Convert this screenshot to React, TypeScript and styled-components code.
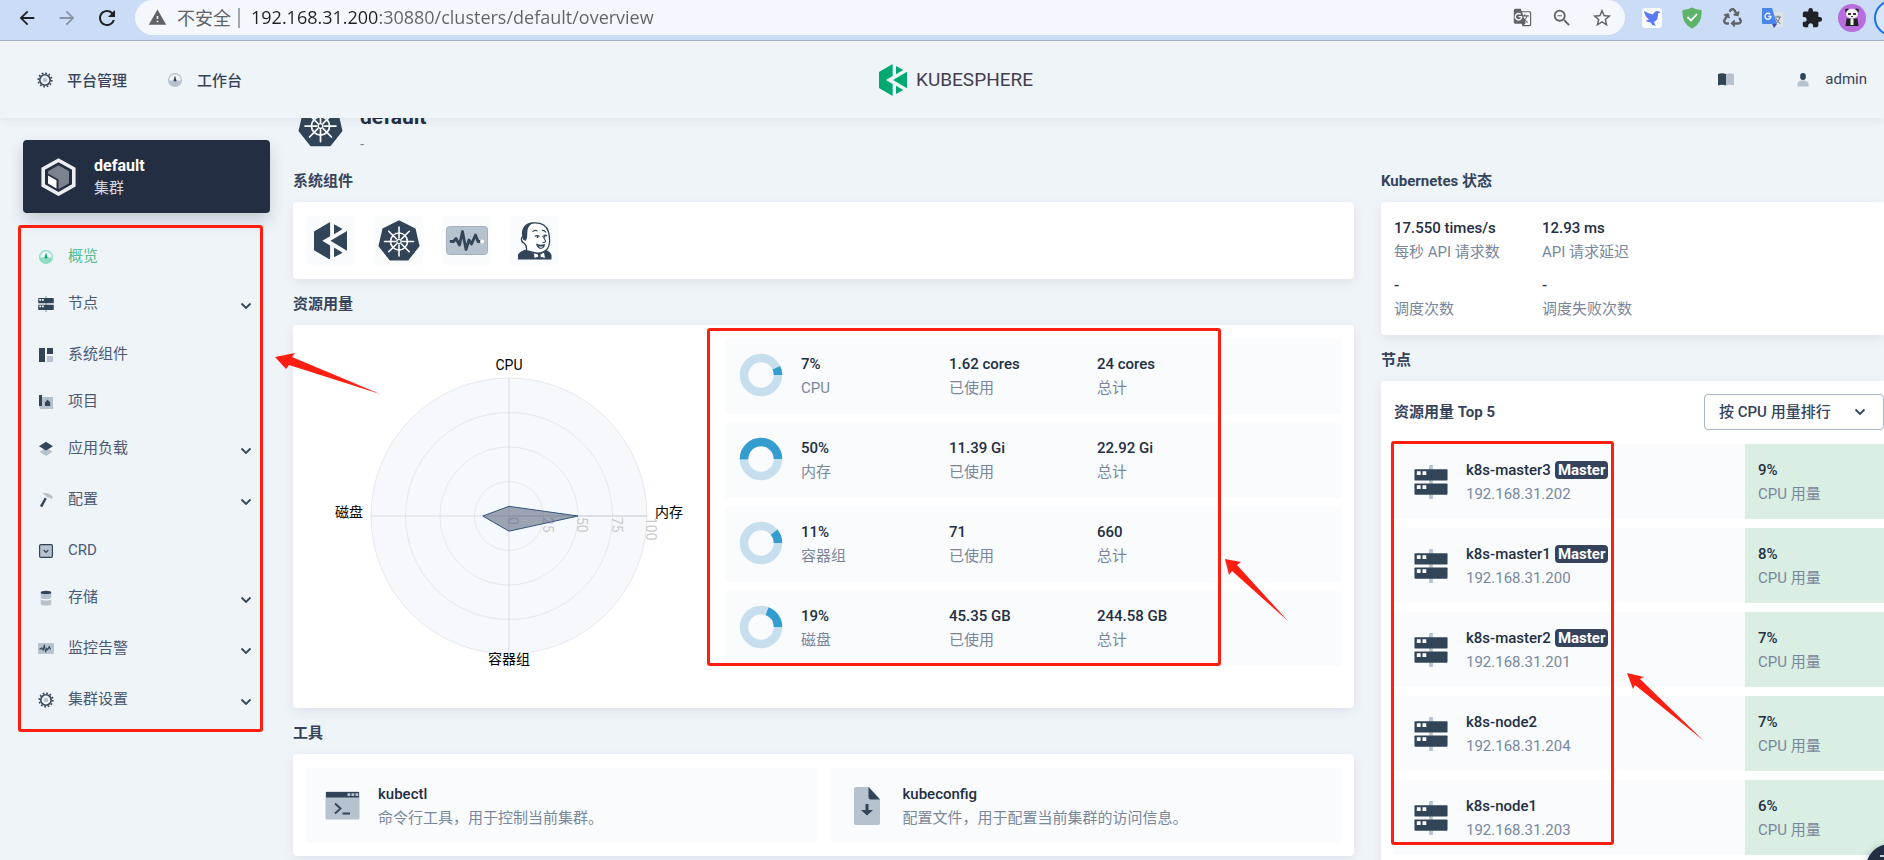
import React from 'react';
import styled, { createGlobalStyle } from 'styled-components';
import {
  MdArrowBack,
  MdArrowForward,
  MdExtension,
  MdGTranslate,
  MdRefresh,
  MdStarOutline,
  MdWarning,
  MdZoomOut,
} from 'react-icons/md';
import { FaRecycle } from 'react-icons/fa';

const dark = '#324558';
const light = '#b6c2cd';
const red = '#ff1f12';

const GlobalStyle = createGlobalStyle`
  *, *::before, *::after { box-sizing: border-box; }
  body {
    margin: 0;
    font-family: Roboto, "Noto Sans CJK SC", sans-serif;
    font-size: 15px;
    line-height: 23px;
    color: #36435c;
    background: #eff4f9;
  }
  button, input, select { font: inherit; color: inherit; }
  button { padding: 0; border: 0; background: none; cursor: pointer; }
  a { color: inherit; text-decoration: none; }
  h1, h2, h3, p, ul, dl, dd { margin: 0; padding: 0; }
  ul { list-style: none; }
  svg { display: block; flex: none; }
`;

const Page = styled.div`
  position: relative;
  display: flex;
  flex-direction: column;
  height: 100vh;
  overflow: hidden;
`;

/* ---------- browser bar ---------- */

const BrowserBar = styled.div`
  flex: none;
  display: flex;
  align-items: flex-start;
  height: 41px;
  padding-left: 7px;
  background: #cbdcf6;
  border-bottom: 1px solid #a0afca;
  overflow: hidden;
`;

const BrowserButton = styled.button<{ $faded?: boolean }>`
  flex: none;
  display: flex;
  align-items: center;
  justify-content: center;
  width: 40px;
  height: 35px;
  color: ${(p) => (p.$faded ? '#8a94a6' : '#202124')};
`;

const NavButtons = styled.div`
  display: flex;
  width: 128px;
`;

const AddressBar = styled.label`
  flex: 1;
  min-width: 0;
  display: flex;
  align-items: center;
  height: 35px;
  padding: 0 3px 0 13px;
  border-radius: 18px;
  background: #f4f7fd;
  color: #5f6368;
  font-family: "Open Sans", "Noto Sans CJK SC", sans-serif;
  font-size: 18px;
`;

const Insecure = styled.span`
  margin-left: 10px;
  padding-right: 7px;
  border-right: 2px solid #a4a8ad;
  line-height: 20px;
  white-space: nowrap;
`;

const Address = styled.input`
  flex: 1;
  min-width: 0;
  margin-left: 11px;
  padding: 0;
  border: 0;
  outline: 0;
  color: transparent;
  background: linear-gradient(90deg, #202124 129px, #5f6368 129px);
  background-clip: text;
  -webkit-background-clip: text;
`;

const Extensions = styled.div`
  flex: none;
  display: flex;
  width: 259px;
  padding-left: 7px;
`;

/* ---------- console header ---------- */

const TopBar = styled.header`
  position: relative;
  z-index: 2;
  flex: none;
  display: grid;
  grid-template-columns: 1fr auto 1fr;
  align-items: center;
  height: 77px;
  padding: 0 9px 0 37px;
  background: #eff4f8;
  box-shadow: 0 4px 8px rgba(36, 46, 66, 0.06);
`;

const TopNav = styled.nav`
  display: flex;
  gap: 40px;
`;

const TopLink = styled.a`
  display: flex;
  align-items: center;
  gap: 14px;
  font-weight: 500;
  span { padding-top: 4px; }
`;

const Brand = styled.a`
  display: flex;
  align-items: center;
  gap: 9px;
  color: #443d4e;
  font-size: 19px;
`;

const UserArea = styled.div`
  display: flex;
  align-items: center;
  justify-content: flex-end;
  gap: 63px;
`;

const UserButton = styled.button`
  display: flex;
  align-items: center;
  gap: 16px;
  margin-right: 8px;
`;

/* ---------- layout ---------- */

const Body = styled.div`
  flex: 1;
  min-height: 0;
  display: flex;
`;

const Sidebar = styled.aside`
  flex: none;
  width: 293px;
  padding: 22px 23px 0;
`;

const ClusterCard = styled.button`
  display: flex;
  align-items: center;
  gap: 18px;
  width: 100%;
  height: 73px;
  padding-left: 18px;
  border-radius: 4px;
  text-align: left;
  background: #242e42;
  box-shadow: 0 8px 16px rgba(36, 46, 66, 0.2);
`;

const ClusterText = styled.span`
  display: flex;
  flex-direction: column;
  color: #d5d9e0;
  strong { color: #fff; font-size: 16px; }
`;

const Menu = styled.ul`
  margin-top: 20px;
  padding: 0 18px 0 15px;
`;

const MenuLink = styled.a<{ $active?: boolean; $parent?: boolean }>`
  display: flex;
  align-items: center;
  height: ${(p) => (p.$parent ? 51 : 47)}px;
  color: ${(p) => (p.$active ? '#55bc8a' : '#4a5974')};
`;

const MenuLabel = styled.span<{ $parent?: boolean }>`
  flex: 1;
  display: flex;
  align-items: center;
  gap: 14px;
  padding-bottom: ${(p) => (p.$parent ? 4 : 0)}px;
`;

const MainColumn = styled.main`
  flex: 1;
  min-width: 0;
`;

const SideColumn = styled.section`
  flex: none;
  width: 503px;
  margin-left: 27px;
  padding-top: 38px;
`;

const ClusterTitle = styled.div`
  display: flex;
  gap: 16px;
  height: 54px;
  margin-top: -16px;
  padding-left: 4px;
  h1 {
    font-size: 21px;
    line-height: 30px;
    color: #242e42;
  }
  p { line-height: 24px; color: #79879c; }
`;

const Heading = styled.h2`
  display: flex;
  align-items: center;
  height: 46px;
  padding-top: 5px;
  font-size: 15px;
  font-weight: 700;
`;

const Card = styled.div<{ $bleed?: boolean }>`
  display: flex;
  padding: 14px 13px;
  border-radius: ${(p) => (p.$bleed ? '4px 0 0 4px' : '4px')};
  background: #fff;
  box-shadow: 0 4px 12px rgba(36, 46, 66, 0.08);
`;

const ComponentsCard = styled(Card)`
  gap: 19px;
`;

const ComponentTile = styled.a`
  display: flex;
  align-items: center;
  justify-content: center;
  width: 49px;
  height: 49px;
  border-radius: 4px;
  background: #f9fbfd;
`;

const UsageCard = styled(Card)`
  padding-bottom: 42px;
`;

const UsageRows = styled.div`
  flex: 1;
  display: flex;
  flex-direction: column;
  gap: 9px;
`;

const UsageRow = styled.dl`
  display: flex;
  height: 75px;
  padding: 14px 14px 0;
  background: #f9fbfd;
  svg { margin-right: 18px; }
`;

const Stat = styled.div`
  display: flex;
  flex-direction: column-reverse;
  justify-content: flex-end;
  width: 148px;
  white-space: nowrap;
  dt { color: #79879c; line-height: 24px; }
  dd { color: #242e42; font-weight: 500; }
`;

const ToolsCard = styled(Card)`
  gap: 14px;
  padding-bottom: 13px;
`;

const Tool = styled.button`
  flex: 1;
  display: flex;
  align-items: center;
  gap: 18px;
  height: 75px;
  padding-left: 19px;
  text-align: left;
  background: #f9fbfd;
`;

const TwoLine = styled.span`
  display: flex;
  flex-direction: column;
  line-height: 24px;
  color: #79879c;
  strong { color: #242e42; font-weight: 500; }
`;

const StatusCard = styled(Card)`
  padding-top: 15px;
`;

const StatusGrid = styled.dl`
  display: grid;
  grid-template-columns: 148px 148px;
  gap: 10px 0;
`;

const NodesCard = styled(Card)`
  flex-direction: column;
  padding: 13px 0 13px 13px;
`;

const NodesHead = styled.div`
  display: flex;
  align-items: center;
  justify-content: space-between;
  margin-bottom: 14px;
  h3 { font-size: 15px; font-weight: 700; }
`;

const SortBox = styled.div`
  display: grid;
  align-items: center;
  width: 180px;
  height: 36px;
  border: 1px solid #a9b4c4;
  border-radius: 4px;
  select, svg { grid-area: 1 / 1; }
  svg { justify-self: end; margin-right: 17px; pointer-events: none; }
`;

const Sort = styled.select`
  appearance: none;
  width: 100%;
  height: 34px;
  padding: 0 0 0 14px;
  border: 0;
  background: transparent;
  font-weight: 500;
`;

const NodeList = styled.ul`
  display: flex;
  flex-direction: column;
  gap: 9px;
`;

const NodeRow = styled.li`
  display: flex;
  height: 75px;
  background: #f9fbfd;
`;

const NodeInfo = styled.a`
  flex: 1;
  display: flex;
  align-items: center;
  gap: 18px;
  padding-left: 20px;
`;

const NodeUsage = styled.div`
  display: flex;
  align-items: center;
  width: 139px;
  padding-left: 13px;
  background: #daeee3;
`;

const Badge = styled.span`
  display: inline-block;
  margin-left: 4px;
  padding: 0 3px;
  border-radius: 4px;
  line-height: 18px;
  font-weight: 700;
  color: #fff;
  background: #36435c;
`;

const HelpButton = styled.button`
  position: absolute;
  right: -30px;
  bottom: -32px;
  display: flex;
  padding: 9px 0 0 13px;
  width: 48px;
  height: 48px;
  border-radius: 24px;
  background: #242e42;
  box-shadow: 0 2px 8px rgba(36, 46, 66, 0.3);
`;

/* ---------- markers drawn over the page ---------- */

const Frame = styled.div<{ $x: number; $y: number; $w: number; $h: number }>`
  position: absolute;
  z-index: 3;
  left: ${(p) => p.$x}px;
  top: ${(p) => p.$y}px;
  width: ${(p) => p.$w}px;
  height: ${(p) => p.$h}px;
  border: 3px solid ${red};
  border-radius: 3px;
  pointer-events: none;
`;

const Arrows = styled.svg`
  position: absolute;
  z-index: 3;
  left: 0;
  top: 0;
  pointer-events: none;
`;

/* ---------- icons ---------- */

const GearIcon = () => (
  <svg width="16" height="16" viewBox="0 0 16 16">
    <circle cx="8" cy="8" r="6.8" fill="none" stroke={dark} strokeWidth="1.6" strokeDasharray="1.7 1.86" />
    <circle cx="8" cy="8" r="5.2" fill="none" stroke={dark} strokeWidth="1.6" />
    <circle cx="8" cy="8" r="2.3" fill={light} />
  </svg>
);

const GaugeIcon = ({ rim = light, hand = dark }: { rim?: string; hand?: string }) => (
  <svg width="16" height="16" viewBox="0 0 16 16">
    <circle cx="8" cy="8" r="6.4" fill="#eef5f8" stroke={rim} strokeWidth="1.2" />
    <path d="M1.4 8.6h13.2a6.7 6.7 0 0 1-13.2 0z" fill={rim} />
    <path d="M8 3.6l1.4 4.6a1.4 1.4 0 1 1-2.8 0z" fill={hand} />
  </svg>
);

const NodesIcon = ({ size = 16 }: { size?: number }) => (
  <svg width={size} height={size} viewBox="0 0 36 36">
    <path d="M16 0h4v36h-4z" fill={light} />
    <rect x="0.5" y="4.5" width="35" height="12" rx="1" fill={dark} />
    <rect x="0.5" y="19.5" width="35" height="12" rx="1" fill={dark} />
    <path d="M3 6.5h4v4H3zM9 6.5h4v4H9zM3 21.5h4v4H3zM9 21.5h4v4H9z" fill="#fff" />
  </svg>
);

const ComponentsIcon = () => (
  <svg width="16" height="16" viewBox="0 0 16 16">
    <path d="M1 1h6v14H1zM9 1h6v6H9z" fill={dark} />
    <path d="M9 9h6v6H9z" fill={light} />
  </svg>
);

const ProjectIcon = () => (
  <svg width="16" height="16" viewBox="0 0 16 16">
    <path d="M4 3h11v12H2v-1.5h2z" fill={light} />
    <path d="M1 1h3v11H1zM7 12V8.5L9.600 5.500l2.600 3V12z" fill={dark} />
    <path d="M1 12h3v2.800H2z" fill={light} />
  </svg>
);

const LayersIcon = () => (
  <svg width="16" height="16" viewBox="0 0 16 16">
    <path d="M8 6.800l6.500 4L8 15l-6.500-4.200z" fill={light} />
    <path d="M8 .8l7 4.400-7 4.400-7-4.400z" fill={dark} />
  </svg>
);

const HammerIcon = () => (
  <svg width="16" height="16" viewBox="0 0 16 16">
    <path d="M4 1.800C6.500.4 9.500.8 11.500 2l2.500 2 1 .5-1.500 2.700-1.700-1.400-2.300-.3-1.400-1.200C7 3 6 2.300 4 1.800z" fill={light} />
    <path d="M6.800 5.500l1.900 1.200-4.500 8.600-2.300-1.200z" fill={dark} />
  </svg>
);

const CrdIcon = () => (
  <svg width="16" height="16" viewBox="0 0 16 16">
    <rect x="1.600" y="1.600" width="12.800" height="12.800" rx="1.200" fill={light} stroke={dark} strokeWidth="1.200" />
    <path d="M5.700 7l2.300 2.300L10.300 7" fill="none" stroke={dark} strokeWidth="1.200" />
  </svg>
);

const StorageIcon = () => (
  <svg width="16" height="16" viewBox="0 0 16 16">
    <path d="M2.700 3h10.600v4.500c0 2-10.600 2-10.600 0z" fill={light} />
    <path d="M2.700 9.500c1.500 1.400 9.100 1.400 10.600 0V14c0 2-10.600 2-10.600 0z" fill={light} />
    <ellipse cx="8" cy="2.400" rx="5.300" ry="1.700" fill={dark} />
  </svg>
);

const PulseIcon = ({ width = 16 }: { width?: number }) => (
  <svg width={width} height={(width * 29) / 42} viewBox="0 0 42 29">
    <rect x="0.500" y="0.500" width="41" height="28" rx="3" fill={light} stroke="#a3b1be" />
    <path
      d="M5 15.500h2.500l2.500-3 3.500 6.500L16.500 5.500l3.500 18 3-9.500 2.500 4L29.500 9l2.500 6.500h3"
      fill="none" stroke={dark} strokeWidth="2.800" strokeLinejoin="round" strokeLinecap="round"
    />
    <circle cx="36" cy="15.500" r="2" fill="#fff" />
  </svg>
);

const BookIcon = () => (
  <svg width="16" height="13" viewBox="0 0 16 13">
    <path d="M0 1q4-1.500 8 0v11.500q-4-1.500-8 0z" fill={dark} />
    <path d="M8 1q4-1.500 8 0v11.500q-4-1.500-8 0z" fill={light} />
  </svg>
);

const PersonIcon = () => (
  <svg width="12" height="16" viewBox="0 0 12 16">
    <path d="M0.500 14.500V12q0-3.500 5.500-3.500T11.500 12v2.500z" fill={light} />
    <rect x="3.200" y="1" width="5.600" height="7" rx="2.700" fill={dark} />
  </svg>
);

const Chevron = () => (
  <svg width="12" height="8" viewBox="0 0 12 8">
    <path d="M1.500 1.500L6 6l4.500-4.500" fill="none" stroke={dark} strokeWidth="1.800" />
  </svg>
);

const KubeSphereMark = ({ width, fill }: { width: number; fill: string }) => (
  <svg width={width} height={(width * 96) / 84} viewBox="0 0 84 96" fill={fill}>
    <path d="M0 24L41 0v36L21 48l20 12v36L0 72z" />
    <path d="M42 48l42-25v50zM51 6l22 12-22 13zM51 65l22 13-22 12z" />
  </svg>
);

const heptagon = Array.from({ length: 7 }, (_, i) => {
  const a = (i * 2 * Math.PI) / 7;
  return `${(22 + 20 * Math.sin(a)).toFixed(2)},${(22.5 - 20 * Math.cos(a)).toFixed(2)}`;
}).join(' ');

const KubernetesIcon = ({ size }: { size: number }) => (
  <svg width={size} height={size} viewBox="0 0 44 44">
    <polygon points={heptagon} fill={dark} stroke={dark} strokeWidth="2" strokeLinejoin="round" />
    <g stroke="#fff" strokeWidth="1.600" fill="none">
      <circle cx="22" cy="22.500" r="8.500" />
      {[0, 45, 90, 135, 180, 225, 270, 315].map((a) => (
        <path key={a} d="M22 19V8" transform={`rotate(${a} 22 22.500)`} strokeLinecap="round" />
      ))}
      <circle cx="22" cy="22.500" r="2.200" strokeWidth="1.200" />
    </g>
  </svg>
);

const JenkinsIcon = () => (
  <svg width="34" height="38" viewBox="0 0 34 38">
    <path d="M0 37.500v-5q2-3.500 8-5l9 5 9-5q6 1 7.500 5.500v4.500z" fill={dark} />
    <path
      d="M8.500 28.500Q9 24 6.500 21.500 3 20 3.500 16.500q.5-2 2-2Q3 2.500 14.500 1 28 0 30.500 10q1.500 6 1 10.500-.5 7-6.500 9.500-4 2-9.500.5z"
      fill="#fff" stroke={dark} strokeWidth="1.300"
    />
    <path d="M4.500 15Q1.500 3.500 14.500 1 10 4.500 9.500 8L9 16l-1.500 3L5 17.500z" fill={dark} />
    <path
      d="M14.500 10q2-2.500 5-1M24 8.500q2.500-.5 4 2M17 14.500q2-2 4.500 0M25.500 13.500q2-1 3.500.5M24.500 14q3 4 3 5.500-1 1.500-3 .8M18.500 22q4 2.500 8 .5M18.500 22q1.500 4.500 5 4.300 2.500-.3 3-3.800M20 24h6"
      fill="none" stroke={dark} strokeWidth="1.100"
    />
    <circle cx="19.500" cy="15" r="1" fill={dark} />
    <circle cx="26.500" cy="14.800" r="1" fill={dark} />
    <path d="M15.500 30.500l5.500 2 5.500-2.500 1 6.500-6.500-1.500-5 1.500z" fill="#fff" stroke={dark} strokeWidth="1" />
    <path d="M20 31.800h2.500v3.500H20z" fill={dark} />
  </svg>
);

const ClusterIcon = () => (
  <svg width="35" height="38" viewBox="0 0 35 38">
    <path d="M17.500 2.200L32.800 10.800v16.600L17.500 36 2.200 27.400V10.800z" fill="none" stroke="#eceef1" strokeWidth="3.600" />
    <path d="M17.500 7.200l10.500 6v12l-10.500 6V21.500L7 15.500v-2.300z" fill="#7c828e" />
    <path d="M7 17.500l8.500 4.700v8.300L7 25.500z" fill="#fff" />
  </svg>
);

const TerminalIcon = () => (
  <svg width="35" height="29" viewBox="0 0 35 29">
    <rect x="0.500" y="0.500" width="34" height="28" rx="1.500" fill={light} />
    <path d="M1 1h33v5.500H1z" fill={dark} />
    <path d="M22.500 2.300h2.800v2.800h-2.800zM26.500 2.300h2.800v2.800h-2.800zM30.500 2.300h2.800v2.800h-2.800z" fill={light} />
    <path d="M10 12.500l5.500 5-5.500 5M17.500 22.500h7.500" fill="none" stroke={dark} strokeWidth="1.900" />
  </svg>
);

const FileIcon = () => (
  <svg width="35" height="38" viewBox="0 0 35 38">
    <path d="M6 0h13l11 12v24a2 2 0 0 1-2 2H6a2 2 0 0 1-2-2V2a2 2 0 0 1 2-2z" fill={light} />
    <path d="M18.500 0L30 12.500h-9a2.500 2.500 0 0 1-2.500-2.500z" fill={dark} />
    <path d="M15.500 17h3v6H23l-6 5.500-6-5.500h4.500z" fill={dark} />
  </svg>
);

const BirdIcon = () => (
  <svg width="20" height="20" viewBox="0 0 20 20">
    <rect width="20" height="20" rx="3" fill="#fafbff" />
    <path d="M2 3q5 3 9 3.500Q12 3 15.500 3l3 1.200-2.500 1.300q.500 6.500-4 8.500l1.500 4q-4-1-5.500-4-3 .3-4-1.500l3-1Q2.500 8 2 3z" fill="#5a7bf5" />
  </svg>
);

const ShieldIcon = () => (
  <svg width="20" height="22" viewBox="0 0 20 22">
    <path d="M10 .5q4 2 9.500 2.500Q20.500 17 10 21.500-.5 17 .5 3 6 2.500 10 .5z" fill="#5db36a" />
    <path d="M5.500 10l3.500 3.500L15 7" fill="none" stroke="#fff" strokeWidth="1.800" />
  </svg>
);

const TranslateIcon = () => (
  <svg width="21" height="20" viewBox="0 0 21 20">
    <rect x="9" y="4" width="12" height="15" rx="1" fill="#dfe3e8" />
    <path d="M13 9h6M16 7.500V9M18 9q-1 5-5 6.500M14 10.500q1.500 4 4.500 5" stroke="#6b7683" fill="none" />
    <path d="M1 0h9l5 16H1a1 1 0 0 1-1-1V1a1 1 0 0 1 1-1z" fill="#4a86ee" />
    <path d="M10 16h5l-3 4z" fill="#3b4fb0" />
    <path d="M8.200 6.200A3 3 0 1 0 9 8.500H6.300" fill="none" stroke="#fff" strokeWidth="1.300" />
  </svg>
);

const AvatarIcon = () => (
  <svg width="28" height="28" viewBox="0 0 28 28">
    <circle cx="14" cy="14" r="14" fill="#b96be0" />
    <path d="M8.500 14.500h11L20.500 22H7.500z" fill="#222" />
    <circle cx="9" cy="6.500" r="2" fill="#222" />
    <circle cx="19" cy="6.500" r="2" fill="#222" />
    <ellipse cx="14" cy="9.800" rx="6" ry="5" fill="#f3f1f2" />
    <path d="M10 9h3v2h-3zM15 9h3v2h-3zM13 12h2v1h-2z" fill="#333" />
    <path d="M12.500 15h3v6h-3z" fill="#f3f1f2" />
  </svg>
);

const RingIcon = () => (
  <svg width="36" height="36" viewBox="0 0 36 36">
    <circle cx="18" cy="18" r="17" fill="#d9e6fb" stroke="#1a73e8" strokeWidth="2" />
  </svg>
);

/* ---------- charts ---------- */

const Donut = ({ percent }: { percent: number }) => {
  const r = 17;
  const length = 2 * Math.PI * r;
  return (
    <svg width="44" height="44" viewBox="0 0 44 44">
      <g fill="none" strokeWidth="8.500" transform="matrix(1 0 0 -1 0 44)">
        <circle cx="22" cy="22" r={r} stroke="#c7deef" />
        <circle
          cx="22" cy="22" r={r} stroke="#329dce"
          strokeDasharray={`${(length * percent) / 100} ${length}`}
        />
      </g>
    </svg>
  );
};

const Radar = () => {
  const cx = 203;
  const cy = 177;
  const radius = 138;
  const at = (v: number) => (radius * v) / 100;
  return (
    <svg width="419" height="327" viewBox="0 0 419 327" fontSize="14">
      <circle cx={cx} cy={cy} r={radius} fill="#f5f9fd" />
      {[25, 50, 75, 100].map((v) => (
        <circle key={v} cx={cx} cy={cy} r={at(v)} fill="none" stroke="#e5e9ed" />
      ))}
      <path d={`M${cx} ${cy - radius}V${cy + radius}M${cx - radius} ${cy}H${cx}`} stroke="#d9dde2" />
      <path d={`M${cx} ${cy}H${cx + radius}`} stroke="#c4c6c9" />
      {[0, 25, 50, 75, 100].map((v) => (
        <text key={v} fill="#c8cacd" transform={`translate(${cx + at(v) - 1} ${cy + 1}) rotate(90)`}>{v}</text>
      ))}
      <polygon
        points={`${cx},${cy - at(7)} ${cx + at(50)},${cy} ${cx},${cy + at(11)} ${cx - at(19)},${cy}`}
        fill="#44506a" fillOpacity="0.500" stroke="#345681"
      />
      <g fill="#000">
        <text x={cx} y="31" textAnchor="middle">CPU</text>
        <text x={cx} y="325" textAnchor="middle">容器组</text>
        <text x={cx - radius - 8} y="178" textAnchor="end">磁盘</text>
        <text x={cx + radius + 8} y="178">内存</text>
      </g>
    </svg>
  );
};

/* ---------- data ---------- */

const menu = [
  { label: '概览', icon: <GaugeIcon rim="#8fdcc0" hand="#00aa72" />, active: true },
  { label: '节点', icon: <NodesIcon />, parent: true },
  { label: '系统组件', icon: <ComponentsIcon /> },
  { label: '项目', icon: <ProjectIcon /> },
  { label: '应用负载', icon: <LayersIcon />, parent: true },
  { label: '配置', icon: <HammerIcon />, parent: true },
  { label: 'CRD', icon: <CrdIcon /> },
  { label: '存储', icon: <StorageIcon />, parent: true },
  { label: '监控告警', icon: <PulseIcon />, parent: true },
  { label: '集群设置', icon: <GearIcon />, parent: true },
];

const usage = [
  { label: 'CPU', percent: 7, used: '1.62 cores', total: '24 cores' },
  { label: '内存', percent: 50, used: '11.39 Gi', total: '22.92 Gi' },
  { label: '容器组', percent: 11, used: '71', total: '660' },
  { label: '磁盘', percent: 19, used: '45.35 GB', total: '244.58 GB' },
];

const status = [
  ['每秒 API 请求数', '17.550 times/s'],
  ['API 请求延迟', '12.93 ms'],
  ['调度次数', '-'],
  ['调度失败次数', '-'],
];

const nodes = [
  { name: 'k8s-master3', ip: '192.168.31.202', cpu: '9%', master: true },
  { name: 'k8s-master1', ip: '192.168.31.200', cpu: '8%', master: true },
  { name: 'k8s-master2', ip: '192.168.31.201', cpu: '7%', master: true },
  { name: 'k8s-node2', ip: '192.168.31.204', cpu: '7%' },
  { name: 'k8s-node1', ip: '192.168.31.203', cpu: '6%' },
];

const tools = [
  { name: 'kubectl', text: '命令行工具，用于控制当前集群。', icon: <TerminalIcon /> },
  { name: 'kubeconfig', text: '配置文件，用于配置当前集群的访问信息。', icon: <FileIcon /> },
];

const extensions = [
  ['飞鸟', <BirdIcon />],
  ['安全', <ShieldIcon />],
  ['回收', <FaRecycle size={19} color="#5f6368" />],
  ['翻译', <TranslateIcon />],
  ['扩展程序', <MdExtension size={22} />],
  ['用户', <AvatarIcon />],
  ['更新', <RingIcon />],
] as [string, React.ReactNode][];

export default function App() {
  return (
    <Page>
      <GlobalStyle />
      <BrowserBar>
        <NavButtons>
          <BrowserButton aria-label="后退"><MdArrowBack size={22} /></BrowserButton>
          <BrowserButton aria-label="前进" $faded><MdArrowForward size={22} /></BrowserButton>
          <BrowserButton aria-label="刷新"><MdRefresh size={24} /></BrowserButton>
        </NavButtons>
        <AddressBar>
          <MdWarning size={19} />
          <Insecure>不安全</Insecure>
          <Address aria-label="地址" defaultValue="192.168.31.200:30880/clusters/default/overview" />
          <BrowserButton aria-label="翻译此页"><MdGTranslate size={19} color="#5f6368" /></BrowserButton>
          <BrowserButton aria-label="缩放"><MdZoomOut size={22} color="#5f6368" /></BrowserButton>
          <BrowserButton aria-label="收藏"><MdStarOutline size={22} color="#5f6368" /></BrowserButton>
        </AddressBar>
        <Extensions>
          {extensions.map(([name, icon]) => (
            <BrowserButton key={name} aria-label={name}>{icon}</BrowserButton>
          ))}
        </Extensions>
      </BrowserBar>

      <TopBar>
        <TopNav>
          <TopLink href="#platform"><GearIcon /><span>平台管理</span></TopLink>
          <TopLink href="#workbench"><GaugeIcon /><span>工作台</span></TopLink>
        </TopNav>
        <Brand href="#home"><KubeSphereMark width={28} fill="#00a971" />KUBESPHERE</Brand>
        <UserArea>
          <a href="#docs" aria-label="文档"><BookIcon /></a>
          <UserButton><PersonIcon />admin</UserButton>
        </UserArea>
      </TopBar>

      <Body>
        <Sidebar>
          <ClusterCard>
            <ClusterIcon />
            <ClusterText><strong>default</strong>集群</ClusterText>
          </ClusterCard>
          <Menu>
            {menu.map((m) => (
              <li key={m.label}>
                <MenuLink href="#menu" $active={m.active} $parent={m.parent}>
                  <MenuLabel $parent={m.parent}>{m.icon}{m.label}</MenuLabel>
                  {m.parent && <Chevron />}
                </MenuLink>
              </li>
            ))}
          </Menu>
        </Sidebar>

        <MainColumn>
          <ClusterTitle>
            <KubernetesIcon size={47} />
            <div><h1>default</h1><p>-</p></div>
          </ClusterTitle>

          <Heading>系统组件</Heading>
          <ComponentsCard>
            <ComponentTile href="#kubesphere" aria-label="KubeSphere"><KubeSphereMark width={33} fill={dark} /></ComponentTile>
            <ComponentTile href="#kubernetes" aria-label="Kubernetes"><KubernetesIcon size={44} /></ComponentTile>
            <ComponentTile href="#monitoring" aria-label="监控"><PulseIcon width={42} /></ComponentTile>
            <ComponentTile href="#devops" aria-label="DevOps"><JenkinsIcon /></ComponentTile>
          </ComponentsCard>

          <Heading>资源用量</Heading>
          <UsageCard>
            <Radar />
            <UsageRows>
              {usage.map((u) => (
                <UsageRow key={u.label}>
                  <Donut percent={u.percent} />
                  <Stat><dt>{u.label}</dt><dd>{u.percent}%</dd></Stat>
                  <Stat><dt>已使用</dt><dd>{u.used}</dd></Stat>
                  <Stat><dt>总计</dt><dd>{u.total}</dd></Stat>
                </UsageRow>
              ))}
            </UsageRows>
          </UsageCard>

          <Heading>工具</Heading>
          <ToolsCard>
            {tools.map((t) => (
              <Tool key={t.name}>
                {t.icon}
                <TwoLine><strong>{t.name}</strong>{t.text}</TwoLine>
              </Tool>
            ))}
          </ToolsCard>
        </MainColumn>

        <SideColumn>
          <Heading>Kubernetes 状态</Heading>
          <StatusCard $bleed>
            <StatusGrid>
              {status.map(([label, value]) => (
                <Stat key={label}><dt>{label}</dt><dd>{value}</dd></Stat>
              ))}
            </StatusGrid>
          </StatusCard>

          <Heading>节点</Heading>
          <NodesCard $bleed>
            <NodesHead>
              <h3>资源用量 Top 5</h3>
              <SortBox>
                <Sort aria-label="排序方式"><option>按 CPU 用量排行</option></Sort>
                <Chevron />
              </SortBox>
            </NodesHead>
            <NodeList>
              {nodes.map((n) => (
                <NodeRow key={n.name}>
                  <NodeInfo href="#node">
                    <NodesIcon size={34} />
                    <TwoLine>
                      <span><strong>{n.name}</strong>{n.master && <Badge>Master</Badge>}</span>
                      {n.ip}
                    </TwoLine>
                  </NodeInfo>
                  <NodeUsage><TwoLine><strong>{n.cpu}</strong>CPU 用量</TwoLine></NodeUsage>
                </NodeRow>
              ))}
            </NodeList>
          </NodesCard>
        </SideColumn>
      </Body>

      <HelpButton aria-label="工具箱">
        <svg width="16" height="16" viewBox="0 0 16 16">
          <path d="M1 3h8v8" fill="none" stroke="#c9ced8" strokeWidth="2" />
        </svg>
      </HelpButton>

      <Frame $x={18} $y={225} $w={245} $h={507} />
      <Frame $x={707} $y={328} $w={514} $h={338} />
      <Frame $x={1391} $y={441} $w={223} $h={404} />
      <Arrows width="1884" height="860" viewBox="0 0 1884 860" fill={red}>
        <path d="M275 357l20-4-3 4 88 37-91-29-3 4z" />
        <path d="M1225 559l16 3-4 3 51 56-56-50-3 4z" />
        <path d="M1627 673l17 4-4 2 64 62-69-56-2 4z" />
      </Arrows>
    </Page>
  );
}
